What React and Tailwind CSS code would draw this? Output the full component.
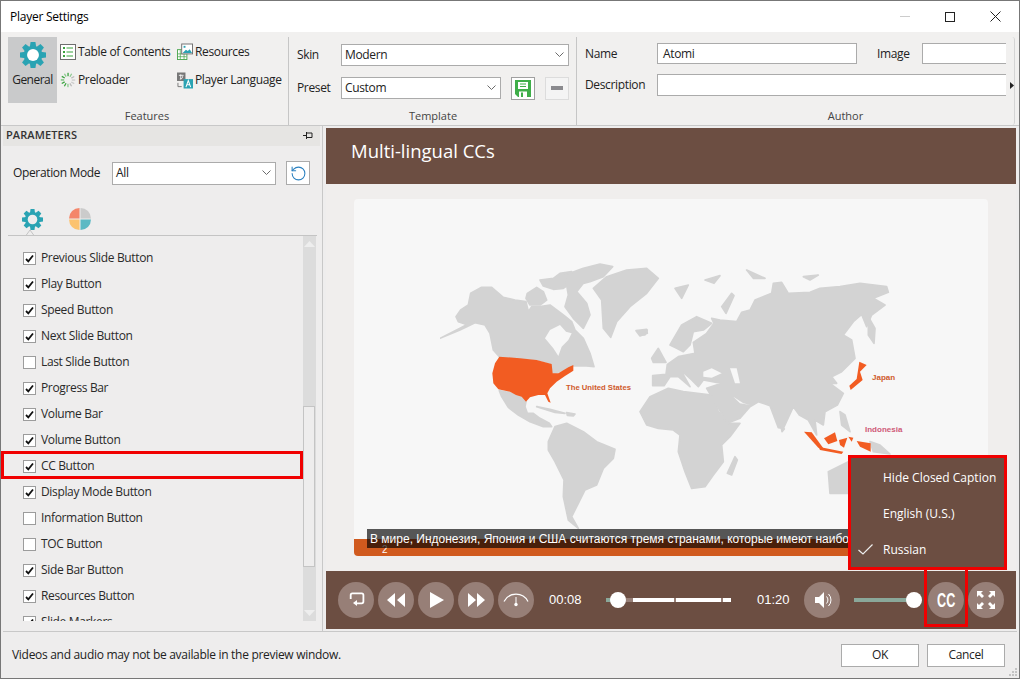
import React from "react";
import { RotateCcw } from "lucide-react";

const ui = { fontFamily: '"Open Sans", "Noto Sans", sans-serif' };
const ar = { fontFamily: '"Liberation Sans", Arial, sans-serif' };

function Gear({ size, hole = "#ffffff", color = "#2aa3b3" }) {
  return (
    <svg width={size} height={size} viewBox="0 0 32 32">
      {[0, 45, 90, 135, 180, 225, 270, 315].map((a) => (
        <path key={a} d="M13 0h6l1 7h-8z" fill={color} transform={`rotate(${a} 16 16)`} />
      ))}
      <circle cx="16" cy="16" r="11.5" fill={color} />
      <circle cx="16" cy="16" r="7.3" fill={hole} />
    </svg>
  );
}

function Chevron({ x = "ml-auto" }) {
  return (
    <svg width="9" height="6" viewBox="0 0 9 6" className={x}>
      <polyline points="0.5,0.5 4.5,4.5 8.5,0.5" fill="none" stroke="#6b6b6b" strokeWidth="1" />
    </svg>
  );
}

function Select({ value, w, h = "h-[22px]" }) {
  return (
    <div className={`${w} ${h} flex items-center bg-white border border-[#ababab] pl-[3px] pr-[4px] text-[12px] text-[#222]`}>
      <span>{value}</span>
      <Chevron />
    </div>
  );
}

function TocIcon() {
  return (
    <svg width="16" height="16" viewBox="0 0 16 16">
      <rect x="0.5" y="0.5" width="15" height="15" fill="#fff" stroke="#6e6e6e" />
      {[3.5, 7.5, 11.5].map((y) => (
        <g key={y} fill="#3aa33f">
          <rect x="3" y={y - 0.5} width="2" height="2" />
          <rect x="6.5" y={y} width="6.5" height="1" />
        </g>
      ))}
    </svg>
  );
}

function PreloaderIcon() {
  const cols = ["#3aa33f", "#8cc98f", "#bbb", "#ccc", "#ccc", "#bbb", "#8cc98f", "#3aa33f", "#3aa33f", "#6fbc72", "#3aa33f", "#8cc98f"];
  return (
    <svg width="16" height="16" viewBox="0 0 16 16">
      {cols.map((c, i) => (
        <rect key={i} x="7.4" y="0.8" width="1.3" height="3.4" fill={c} transform={`rotate(${i * 30} 8 8)`} />
      ))}
    </svg>
  );
}

function ResourcesIcon() {
  return (
    <svg width="17" height="18" viewBox="0 0 17 18">
      <rect x="0.5" y="6.5" width="10" height="10.5" fill="#fff" stroke="#4ca64f" />
      <path d="M3.5 7v10M7.5 7v10M1 11h9M1 14h9" stroke="#4ca64f" strokeWidth="0.8" />
      <rect x="5" y="0.5" width="11.5" height="10.5" fill="#fff" stroke="#6e6e6e" />
      <path d="M6 10l3.5-3.5 2 1.5 2-2 2.5 4z" fill="#2aa3b3" />
      <rect x="7" y="2.5" width="2" height="2" fill="#2aa3b3" />
    </svg>
  );
}

function LangIcon() {
  return (
    <svg width="17" height="17" viewBox="0 0 17 17">
      <rect x="0" y="0" width="9" height="9" fill="#777" />
      <path d="M2 3h5M4 2v5M3 7c2 0 3-1 3-3" stroke="#fff" strokeWidth="0.9" fill="none" />
      <rect x="7" y="7" width="10" height="10" fill="#2aa3b3" />
      <path d="M9.5 15.5l2.5-7 2.5 7M10.5 13h3" stroke="#fff" strokeWidth="1.1" fill="none" />
      <path d="M1 11v4h4" stroke="#777" fill="none" />
    </svg>
  );
}

function Feature({ icon, label }) {
  return (
    <div className="flex items-center gap-[2px] h-[18px]">
      <span className="w-[16px] h-[16px] flex items-center justify-center shrink-0">{icon}</span>
      <span className="text-[12px] text-[#222] whitespace-nowrap">{label}</span>
    </div>
  );
}

function Check({ label, on }) {
  return (
    <div className="h-[26px] flex items-center shrink-0">
      <span className="w-[13px] h-[13px] ml-[20px] mr-[5px] bg-white border border-[#9c9c9c] flex items-center justify-center shrink-0">
        {on && (
          <svg width="9" height="9" viewBox="0 0 9 9">
            <polyline points="1,5 3.3,7.3 8,1.5" fill="none" stroke="#111" strokeWidth="1.8" />
          </svg>
        )}
      </span>
      <span className="text-[12px] text-[#2a2a2a] whitespace-nowrap">{label}</span>
    </div>
  );
}

function Round({ children, cls = "" }) {
  return (
    <div className={`w-[36px] h-[36px] rounded-full bg-[#977f77] flex items-center justify-center shrink-0 ${cls}`}>
      <svg width="36" height="36" viewBox="0 0 36 36">{children}</svg>
    </div>
  );
}

function WorldMap() {
  const g = "#d3d3d3";
  const o = "#f25c22";
  const w = "#f7f7f7";
  return (
    <svg width="500" height="320" viewBox="440 240 500 320" className="absolute left-[86px] top-[41px]">
      <g transform="translate(440 250) scale(0.33333)" strokeLinejoin="round">
        <g fill={g} stroke={g} strokeWidth="5">
          <path d="M0 265L60 235 100 214 75 222 55 215 48 200 62 180 85 165 92 130 125 112 155 112 190 142 225 150 258 155 265 185 275 170 300 170 330 165 350 180 370 195 395 215 405 240 430 265 450 310 462 350 440 348 400 348 340 372 335 340 290 328 178 320 160 300 150 250 135 225 105 218 60 240z" />
          <path d="M262 130L290 112 310 125 320 150 300 165 270 165 258 145z" />
          <path d="M300 90L340 85 360 70 395 65 400 95 370 115 340 118 310 108z" />
          <path d="M375 75L430 55 480 42 518 50 490 80 450 95 430 100 410 125 440 160 450 195 430 235 400 205 375 170 385 135z" />
          <path d="M178 422L185 440 205 472 235 495 270 515 310 530 335 530 328 520 300 505 280 490 262 490 255 470 258 455 245 440 210 428z" />
          <path d="M290 470L330 478 375 490 345 487z" />
          <path d="M380 488L405 492 400 498 382 496z" />
          <path d="M325 575L345 530 380 520 430 545 470 575 525 598 520 625 490 655 470 705 435 720 415 760 395 800 415 835 385 810 370 740 372 690 345 635 325 600z" />
          <path d="M460 115L500 80 560 60 620 55 655 85 620 130 570 170 530 215 512 262 490 235 485 150z" />
          <path d="M588 242L620 238 622 250 600 258z" />
        </g>
        <path fill={w} d="M315 265L330 240 360 225 378 245 395 250 385 270 365 290 355 318 340 295z" />
        <path fill={o} d="M178 320L240 325 290 330 335 342 338 370 355 370 385 352 400 345 400 362 375 378 350 395 330 415 322 430 332 458 325 455 315 435 295 435 270 442 258 455 245 440 228 435 210 425 175 418 160 400 157 370 165 340z" />
      </g>
      <g transform="translate(640 255) scale(0.33333)" strokeLinejoin="round">
        <g fill={g} stroke={g} strokeWidth="5">
          <path d="M0 470L30 425 85 400 130 410 215 420 235 470 265 505 300 505 270 545 245 570 250 620 220 660 195 695 155 700 135 650 115 590 120 540 100 525 55 520 20 510z" />
          <path d="M285 605L292 615 275 660 262 655z" />
          <path d="M38 392L38 362 78 358 82 328 115 305 165 295 160 262 200 235 222 205 215 190 240 195 290 200 305 172 330 165 345 135 395 115 400 85 425 82 445 115 510 112 540 100 600 95 660 85 740 95 745 112 700 130 735 150 695 180 680 215 665 178 640 200 610 240 635 255 645 310 605 350 575 365 590 385 570 385 610 415 592 450 555 470 550 510 525 495 530 540 505 495 478 480 460 455 430 520 415 518 390 452 355 440 330 455 300 490 262 505 218 430 200 400 245 385 190 375 175 395 155 375 122 345 150 395 115 365 90 365 72 392z" />
          <path d="M90 270L125 210 170 185 215 205 190 225 160 230 150 270 130 290 110 280z" />
          <path d="M35 310L55 280 78 322 40 322z" />
          <path d="M0 230L22 225 15 240 0 240z" />
          <path d="M245 155L275 115 282 122 258 175z" />
          <path d="M105 100L145 90 125 130z" />
          <path d="M195 75L240 62 222 85z" />
          <path d="M320 45L375 70 340 70z" />
          <path d="M490 65L535 60 510 75z" />
          <path d="M685 185L705 220 702 265 685 240z" />
          <path d="M600 470L615 480 630 530 605 510z" />
          <path d="M423 515L433 522 426 530z" />
          <path d="M690 560L720 570 750 597 700 590z" />
          <path d="M565 650L625 620 625 715 570 715z" />
        </g>
        <g fill={w}>
          <path d="M190 350L215 340 245 355 215 368 190 365z" />
          <path d="M270 340L290 340 300 385 285 385z" />
          <path d="M280 425L310 445 330 450 300 445z" />
        </g>
        <g fill={o}>
          <path d="M658 320L680 330 660 350 668 375 632 405 628 392 650 372z" />
          <path d="M492 530L515 532 550 580 535 578z" />
          <path d="M535 575L610 590 605 597 540 585z" />
          <path d="M552 550L585 532 592 558 565 568z" />
          <path d="M597 555L622 548 612 578 600 570z" />
          <path d="M650 558L692 565 692 590 660 575z" />
          <path d="M625 545L640 548 635 560z" />
        </g>
      </g>
    </svg>
  );
}

const items = [
  ["Previous Slide Button", 1],
  ["Play Button", 1],
  ["Speed Button", 1],
  ["Next Slide Button", 1],
  ["Last Slide Button", 0],
  ["Progress Bar", 1],
  ["Volume Bar", 1],
  ["Volume Button", 1],
  ["CC Button", 1],
  ["Display Mode Button", 1],
  ["Information Button", 0],
  ["TOC Button", 0],
  ["Side Bar Button", 1],
  ["Resources Button", 1],
  ["Slide Markers", 1],
];

export default function App() {
  return (
    <div style={ui} className="relative w-[1020px] h-[679px] flex flex-col overflow-hidden border border-[#777] bg-[#eeeded] tracking-[-0.35px]">
      {/* title bar */}
      <div className="h-[31px] shrink-0 bg-white flex items-center pl-[9px] pr-[1px]">
        <span className="text-[12px] text-black tracking-[-0.25px]">Player Settings</span>
        <div className="ml-auto flex items-center">
          <div className="w-[45px] flex justify-center"><div className="w-[10px] h-px bg-[#ccc]" /></div>
          <div className="w-[46px] flex justify-center"><div className="w-[10px] h-[10px] border border-[#222]" /></div>
          <div className="w-[45px] flex justify-center">
            <svg width="11" height="11" viewBox="0 0 11 11"><path d="M0.5 0.5l10 10M10.5 0.5l-10 10" stroke="#222" /></svg>
          </div>
        </div>
      </div>

      {/* ribbon */}
      <div className="h-[94px] shrink-0 bg-[#f1f0ef] border-b border-[#c8c8c8] flex pt-[5px] pr-[4px] relative">
        <div className="w-[288px] flex flex-col border-r border-[#c6c6c6] pl-[7px] shrink-0">
          <div className="flex h-[67px]">
            <div className="w-[49px] h-[66px] bg-[#c9cacb] flex flex-col items-center pt-[5px]">
              <Gear size={26} />
              <span className="text-[12px] text-[#222] mt-[3px] tracking-[-0.5px]">General</span>
            </div>
            <div className="grid grid-cols-[117px_auto] grid-rows-[18px_18px] gap-y-[10px] pl-[3px] pt-[6px]">
              <Feature icon={<TocIcon />} label="Table of Contents" />
              <Feature icon={<ResourcesIcon />} label="Resources" />
              <Feature icon={<PreloaderIcon />} label="Preloader" />
              <Feature icon={<LangIcon />} label="Player Language" />
            </div>
          </div>
          <div className="mt-auto h-[17px] flex items-center justify-center text-[11px] text-[#444] tracking-normal pr-[2px]">Features</div>
        </div>

        <div className="w-[288px] flex flex-col border-r border-[#c6c6c6] shrink-0 pl-[8px] pr-[7px]">
          <div className="flex items-center h-[22px] mt-[7px]">
            <span className="w-[44px] text-[12px] text-[#222]">Skin</span>
            <Select value="Modern" w="w-[228px]" />
          </div>
          <div className="flex items-center h-[22px] mt-[11px]">
            <span className="w-[44px] text-[12px] text-[#222]">Preset</span>
            <Select value="Custom" w="w-[160px]" />
            <div className="w-[24px] h-[23px] ml-[10px] bg-white border border-[#a0a0a0] flex items-center justify-center">
              <svg width="16" height="17" viewBox="0 0 16 17">
                <path d="M0 0h16v17H3l-3-3z" fill="#3fae49" />
                <rect x="3" y="2" width="10" height="7" fill="#fff" />
                <path d="M5 4h6M5 6.5h6" stroke="#3fae49" />
                <rect x="4" y="11.5" width="8" height="5.5" fill="#fff" />
                <rect x="6" y="12.5" width="2" height="4.5" fill="#3fae49" />
              </svg>
            </div>
            <div className="w-[24px] h-[23px] ml-[10px] bg-[#f4f4f4] border border-[#dcdcdc] flex items-center justify-center">
              <div className="w-[12px] h-[4px] bg-[#8a8a8e]" />
            </div>
          </div>
          <div className="mt-auto h-[17px] flex items-center justify-center text-[11px] text-[#444] tracking-normal">Template</div>
        </div>

        <div className="flex-1 flex flex-col pl-[8px] min-w-0 border-r border-[#d4d4d4] rounded-r-[3px]">
          <div className="flex items-center h-[21px] mt-[6px]">
            <span className="w-[72px] text-[12px] text-[#222]">Name</span>
            <div className="w-[200px] h-[21px] bg-white border border-[#ababab] flex items-center pl-[5px] text-[12px] text-[#222]">Atomi</div>
            <span className="w-[45px] ml-[20px] text-[12px] text-[#222]">Image</span>
            <div className="w-[84px] h-[21px] bg-white border border-[#ababab] border-r-0" />
          </div>
          <div className="flex items-center h-[22px] mt-[10px]">
            <span className="w-[72px] text-[12px] text-[#222]">Description</span>
            <div className="w-[349px] h-[22px] bg-white border border-[#ababab] border-r-0" />
            <svg width="4" height="7" viewBox="0 0 4 7" className="ml-[4px]"><path d="M0 0l4 3.5L0 7z" fill="#222" /></svg>
          </div>
          <div className="mt-auto h-[17px] flex items-center justify-center text-[11px] text-[#444] pl-[92px] tracking-normal">Author</div>
        </div>
      </div>

      {/* main */}
      <div className="flex-1 flex min-h-0">
        <div className="w-[322px] shrink-0 border-r border-[#c8c8c8] pl-[2px] flex flex-col relative">
          <div className="h-[20px] mr-[2px] bg-[#e6e5e3] flex items-center pl-[3px] pr-[4px] pb-[2px] shrink-0">
            <span className="text-[11px] font-semibold text-[#333] tracking-[0.1px]">PARAMETERS</span>
            <svg width="10" height="7" viewBox="0 0 10 7" className="ml-auto mr-[3px]">
              <path d="M0 3.5h3M3.5 1h5.5v4.5H3.5zM3.5 0v7" stroke="#222" fill="none" />
            </svg>
          </div>
          <div className="flex items-center h-[24px] mt-[15px] shrink-0 pl-[10px]">
            <span className="w-[99px] text-[12px] text-[#222]">Operation Mode</span>
            <Select value="All" w="w-[164px]" h="h-[23px]" />
            <div className="w-[24px] h-[24px] ml-[10px] bg-white border border-[#ababab] flex items-center justify-center">
              <RotateCcw size={17} strokeWidth={1.5} color="#2a80c0" />
            </div>
          </div>
          <div className="h-[51px] mx-[5px] shrink-0 flex items-end relative border-b border-[#c4c4c4]">
            <div className="flex items-center gap-[26px] pl-[14px] pb-[5px]">
              <Gear size={21} hole="#eeeded" />
              <svg width="22" height="22" viewBox="0 0 22 22">
                <path d="M10.5 10.5V0A10.5 10.5 0 0 0 0 10.5z" fill="#f4866a" />
                <path d="M11.5 10.5V0A10.5 10.5 0 0 1 22 10.5z" fill="#cbcbcb" />
                <path d="M10.5 11.5V22A10.5 10.5 0 0 1 0 11.5z" fill="#fcc36f" />
                <path d="M11.5 11.5V22A10.5 10.5 0 0 0 22 11.5z" fill="#5bb9c4" />
              </svg>
            </div>
            <svg width="14" height="7" viewBox="0 0 14 7" className="absolute left-[15px] bottom-[-1px]">
              <path d="M0 6.5h3L7 1l4 5.5h3" fill="none" stroke="#c4c4c4" />
            </svg>
          </div>
          <div className="flex-1 min-h-0 flex pr-[6px] pb-[10px]">
            <div className="flex-1 min-w-0 h-full overflow-hidden flex flex-col pt-[9px]">
              {items.map(([l, on]) => (
                <Check key={l} label={l} on={!!on} />
              ))}
            </div>
            <div className="w-[13px] h-full bg-[#dcdcdc] flex flex-col items-center relative shrink-0">
              <svg width="11" height="6" viewBox="0 0 11 6" className="mt-[5px]"><path d="M5.5 0L11 6H0z" fill="#eee" /></svg>
              <div className="absolute top-[170px] left-0 w-[12px] h-[161px] bg-[#eeeded] border border-[#c4c4c4]" />
              <svg width="11" height="6" viewBox="0 0 11 6" className="mt-auto mb-[5px]"><path d="M5.5 6L11 0H0z" fill="#eee" /></svg>
            </div>
          </div>
          <div className="absolute left-0 top-[325px] w-[302px] h-[28px] border-[3px] border-[#f00000]" />
        </div>

        <div className="flex-1 min-w-0 relative pl-[3px] pr-[3px] pt-[2px] pb-[2px] flex flex-col">
          <div className="h-[56px] shrink-0 bg-[#6c4e42] flex items-start pl-[25px] pt-[9px]">
            <span className="text-[18.5px] text-white tracking-normal">Multi-lingual CCs</span>
          </div>
          <div className="flex-1 min-h-0 bg-[#f0eeed] pt-[15px] px-[28px] pb-[15px]">
            <div className="relative w-full h-full bg-[#f7f7f7] rounded-[4px] overflow-hidden" style={ar}>
              <WorldMap />
              <span className="absolute left-[212px] top-[183px] text-[7.7px] font-bold text-[#cf5a2c] tracking-normal whitespace-nowrap">The United States</span>
              <span className="absolute left-[518px] top-[173px] text-[8px] font-bold text-[#cf5a2c] tracking-normal">Japan</span>
              <span className="absolute left-[511px] top-[225px] text-[8px] font-bold text-[#cf5a78] tracking-normal">Indonesia</span>
              <div className="absolute left-0 bottom-0 w-[494px] h-[17px] bg-[#d05a1e] flex items-end pl-[28px] pb-[1px] text-[10px] leading-none text-white">2</div>
              <div className="absolute left-[13px] top-[330px] w-[483px] h-[19px] bg-black/65 overflow-hidden flex items-center pl-[3px] text-[12px] text-white tracking-normal whitespace-nowrap">
                В мире, Индонезия, Япония и США считаются тремя странами, которые имеют наибольшее
              </div>
            </div>
          </div>
          <div className="h-[58px] shrink-0 bg-[#6c4e42] flex items-center pl-[12px] text-white" style={ar}>
            <div className="flex gap-[4px]">
              <Round>
                <path d="M12.7 17v-4q0-1.7 1.7-1.7h9.3q1.7 0 1.7 1.7v6.6q0 1.7-1.7 1.7H18" fill="none" stroke="#fff" strokeWidth="1.8" />
                <path d="M19 18v6l-4-3z" fill="#fff" />
              </Round>
              <Round>
                <path d="M17 11v14l-8-7zM27 11v14l-8-7z" fill="#fff" />
              </Round>
              <Round>
                <path d="M12 10l14 8-14 8z" fill="#fff" />
              </Round>
              <Round>
                <path d="M10 11l8 7-8 7zM19 11l8 7-8 7z" fill="#fff" />
              </Round>
              <Round>
                <path d="M6 19.5A13.5 13.5 0 0 1 30 19.5" fill="none" stroke="#fff" strokeWidth="1.2" />
                <path d="M18 15v7" stroke="#fff" strokeWidth="1" />
                <circle cx="18" cy="22.5" r="1.7" fill="#fff" />
              </Round>
            </div>
            <span className="ml-[15px] w-[33px] text-[13px] tracking-normal">00:08</span>
            <div className="ml-[24px] w-[126px] h-[16px] relative flex items-center shrink-0">
              <div className="w-[12px] h-[4px] bg-[#8aa89a]" />
              <div className="w-[15px] h-[4px] bg-[#977f77]" />
              <div className="w-[41px] h-[4px] bg-white" />
              <div className="w-[2px] h-[4px] bg-[#977f77]" />
              <div className="w-[45px] h-[4px] bg-white" />
              <div className="w-[2px] h-[4px] bg-[#977f77]" />
              <div className="w-[8px] h-[4px] bg-white" />
              <div className="absolute left-[4px] top-0 w-[16px] h-[16px] rounded-full bg-white" />
            </div>
            <span className="ml-[25px] w-[33px] text-[13px] tracking-normal">01:20</span>
            <Round cls="ml-[14px]">
              <path d="M11 15h4l5-5v16l-5-5h-4z" fill="#fff" />
              <path d="M22.5 14.5a5 5 0 0 1 0 7M24.5 12a8.5 8.5 0 0 1 0 12" fill="none" stroke="#fff" strokeWidth="1" />
            </Round>
            <div className="ml-[14px] w-[60px] h-[16px] relative flex items-center shrink-0">
              <div className="w-full h-[4px] bg-[#8aa89a]" />
              <div className="absolute right-[-8px] top-0 w-[16px] h-[16px] rounded-full bg-white" />
            </div>
            <div className="ml-[14px] w-[36px] h-[36px] rounded-full bg-[#977f77] flex items-center justify-center shrink-0 text-white text-[21px] font-bold">
              <span className="scale-x-[0.6] tracking-normal">CC</span>
            </div>
            <Round cls="ml-[4px]">
              <path d="M9 9h6l-2 2 3 3-2 2-3-3-2 2zM27 9v6l-2-2-3 3-2-2 3-3-2-2zM9 27v-6l2 2 3-3 2 2-3 3 2 2zM27 27h-6l2-2-3-3 2-2 3 3 2-2z" fill="#fff" />
            </Round>
          </div>
          <div className="absolute left-[525px] top-[329px] w-[159px] h-[115px] border-[3px] border-[#f00000] bg-[#6c4e42] text-white text-[12px] tracking-normal flex flex-col pt-[2px]">
            <div className="h-[36px] shrink-0 flex items-center pl-[32px] whitespace-nowrap">Hide Closed Caption</div>
            <div className="h-[36px] shrink-0 flex items-center pl-[32px] whitespace-nowrap">English (U.S.)</div>
            <div className="h-[36px] shrink-0 flex items-center relative pl-[32px]">
              <svg width="15" height="11" viewBox="0 0 15 11" className="absolute left-[7px] top-[12px]">
                <polyline points="0.5,6 5,10 14.5,0.5" fill="none" stroke="#eee" strokeWidth="1.2" />
              </svg>
              Russian
            </div>
          </div>
          <div className="absolute left-[601px] top-[443px] w-[44px] h-[58px] border-[3px] border-t-0 border-[#f00000]" />
        </div>
      </div>

      {/* footer */}
      <div className="h-[47px] shrink-0 mx-[2px] border-t border-[#c8c8c8] flex items-center pl-[9px] pr-[12px]">
        <span className="text-[12px] text-[#222] tracking-[-0.3px]">Videos and audio may not be available in the preview window.</span>
        <div className="ml-auto w-[78px] h-[23px] bg-white border border-[#ababab] flex items-center justify-center text-[12px] text-[#222]">OK</div>
        <div className="ml-[8px] w-[78px] h-[23px] bg-white border border-[#ababab] flex items-center justify-center text-[12px] text-[#222]">Cancel</div>
      </div>
      <svg width="10" height="10" viewBox="0 0 10 10" className="absolute right-[1px] bottom-[1px]">
        <path d="M7 1h2v2H7zM4 4h2v2H4zM7 4h2v2H7zM1 7h2v2H1zM4 7h2v2H4zM7 7h2v2H7z" fill="#c4c4c4" />
      </svg>
    </div>
  );
}
